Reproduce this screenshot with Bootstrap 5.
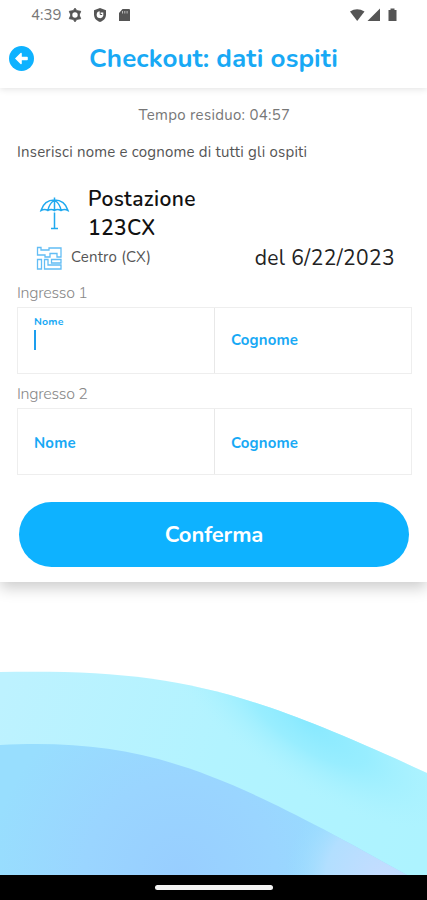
<!DOCTYPE html>
<html lang="it">
<head>
<meta charset="utf-8">
<meta name="viewport" content="width=device-width, initial-scale=1">
<title>Checkout: dati ospiti</title>
<link href="https://cdn.jsdelivr.net/npm/bootstrap@5.3.0/dist/css/bootstrap.min.css" rel="stylesheet">
<style>
  :root { --sky: #0eb2ff; --label: #18a9f5; }
  body { font-family: Nunito, Lato, "Open Sans", sans-serif; width: 427px; height: 900px; color: #555; }
  .semi { font-weight: 650; }
  .screen { height: 900px; }
  .status-row { height: 30px; padding: 0 28px 0 31px; }
  .clock { font-size: 15px; color: #777; width: 30px; }
  .app-header { height: 58px; padding: 0 34px 0 9px; box-shadow: 0 1px 7px rgba(0,0,0,.12); z-index: 2; }
  .page-title { font-size: 26px; letter-spacing: .08px; color: var(--label); line-height: 30px; margin: 0; }
  .sheet { height: 494px; padding: 0 15px 0 17px; box-shadow: 0 6px 14px rgba(0,0,0,.2); z-index: 1; }
  .timer { font-size: 15px; letter-spacing: .3px; line-height: 20px; margin-top: 17px; color: #777; }
  .hint { font-size: 15px; letter-spacing: .2px; line-height: 20px; margin-top: 17px; color: #555; }
  .spot { margin-top: 23px; height: 58px; padding-left: 22px; }
  .spot-name { font-size: 21px; line-height: 29px; letter-spacing: .4px; color: #111; margin-left: 18px; width: 130px; }
  .zone-row { height: 29px; padding: 0 17px 0 19px; }
  .zone { font-size: 15px; letter-spacing: .2px; margin-left: 9px; }
  .day { font-size: 21px; letter-spacing: .4px; line-height: 28px; color: #222; }
  .entry-title { font-size: 16px; font-weight: 300; line-height: 20px; color: #888; letter-spacing: -.3px; }
  .first-entry { margin-top: 11px; }
  .second-entry { margin-top: 10px; }
  .pair { height: 67px; border: 1px solid #eee; font-size: 15px; letter-spacing: .15px; color: var(--label); }
  .pair > .col { padding-left: 16px; font-weight: 700; }
  .pair > .col + .col { border-left: 1px solid #e8e8e8; }
  .tiny-label { font-size: 10.5px; line-height: 12px; padding-top: 8px; letter-spacing: .2px; }
  .caret { width: 2px; height: 20px; background: #1d9eee; margin-top: 2px; }
  .confirm { height: 65px; margin: 26.5px 3px 0 2px; padding-top: 9px; background: var(--sky); font-size: 22px; letter-spacing: -.1px; }
  .waves { height: 293px; }
  .navbar-strip { height: 25px; background: #000; }
  .home-pill { width: 118px; height: 5px; background: #f3f3f3; }
</style>
</head>
<body>
<div class="screen d-flex flex-column bg-white overflow-hidden">
  <div class="status-row d-flex align-items-center flex-shrink-0 bg-white position-relative z-3">
    <span class="clock">4:39</span>
    <svg class="ms-1 me-2" width="20" height="16" viewBox="0 0 20 16"><path d="M10 1.200 11.800 3.700 15.700 4.300 14.100 8 15.700 11.700 11.800 12.300 10 14.800 8.200 12.300 4.300 11.700 5.900 8 4.300 4.300 8.200 3.700z" fill="#555" stroke="#555" stroke-linejoin="round"/><circle cx="10" cy="8" r="2.700" fill="#fff"/></svg>
    <svg width="14" height="16" viewBox="0 0 14 16"><path d="M7 1 1 3.200v4.200C1 11 3.400 13.700 7 15c3.600-1.300 6-4 6-7.600V3.200z" fill="#555"/><path d="M7 4.300a3.400 3.400 0 1 0 3.300 4.400L10.300 5.500H7.500z" fill="#fff"/><path d="M7.200 4v3.500h2" stroke="#555" fill="none"/></svg>
    <svg class="ms-2" width="18" height="16" viewBox="0 0 18 16"><path d="M7.500 2H14q1 0 1 1v11H4V6z" fill="#555"/><path d="M7.500 4v2.500M9.800 4v2.500M12.100 4v2.500" stroke="#bbb"/></svg>
    <svg class="ms-auto" width="50" height="16" viewBox="0 0 50 16"><g fill="#555"><path d="M1 4.500Q8 0 15.500 4.500L8.200 14z"/><path d="M31 1.500V14H18.500z"/><path d="M39.500 3h2V1.500h4V3h2v11h-8z"/></g></svg>
  </div>

  <header class="app-header d-flex align-items-center bg-white position-relative flex-shrink-0">
    <svg width="25" height="26" viewBox="0 0 25 26"><circle cx="12.500" cy="12.500" r="12.500" fill="#0eb2ff"/><path d="M6 12.500l5.500-5.500q1-.8 1.300.5v3.200h5.200q.8 0 .8.800v2q0 .8-.8.800h-5.200v3.200q-.3 1.300-1.300.5z" fill="#fff"/></svg>
    <h1 class="page-title fw-bold text-center flex-grow-1">Checkout: dati ospiti</h1>
  </header>

  <main class="sheet bg-white position-relative flex-shrink-0 d-flex flex-column">
    <div class="timer text-center">Tempo residuo: 04:57</div>
    <div class="hint">Inserisci nome e cognome di tutti gli ospiti</div>

    <div class="spot d-flex align-items-center">
      <svg width="31" height="36" viewBox="0 0 31 36" fill="none" stroke="#20a9ef" stroke-width="1.500"><path d="M2 14.500C4 8 9 4 15.500 4S27 8 29 14.500Q25.500 12.500 22 14.500 18.500 12.500 15.500 14.500 12 12.500 9 14.500 5.500 12.500 2 14.500zM15.500 1.500V4M9 14Q10 8 15.500 4 21 8 22 14M15.500 4v10" /><path d="M15.500 16.500V32M12 32.500h7"/></svg>
      <div class="spot-name semi">Postazione 123CX</div>
    </div>

    <div class="zone-row d-flex align-items-center">
      <svg width="26" height="24" viewBox="0 0 26 24" fill="none" stroke="#62bdf5" stroke-width="1.300"><path d="M1.500 1.500H5v2.500h8V2h12v9h-4V7.500h-7V11H9V9H1.500zM1.500 13.500h4V23h-4zM8.500 13.500H12V19h13v4H8.500zM15.500 13.500H25V17h-9.500z"/></svg>
      <span class="zone">Centro (CX)</span>
      <span class="day ms-auto">del 6/22/2023</span>
    </div>

    <div class="entry-title first-entry mb-1">Ingresso 1</div>
    <div class="pair row g-0">
      <div class="col"><div class="tiny-label">Nome</div><div class="caret"></div></div>
      <div class="col d-flex align-items-center">Cognome</div>
    </div>
    <div class="entry-title second-entry mb-1">Ingresso 2</div>
    <div class="pair row g-0">
      <div class="col d-flex align-items-center pt-1">Nome</div>
      <div class="col d-flex align-items-center pt-1">Cognome</div>
    </div>
    <button type="button" class="confirm btn rounded-pill border-0 text-white fw-bold">Conferma</button>
  </main>

  <svg class="waves flex-shrink-0" width="427" viewBox="0 582 427 293" preserveAspectRatio="none">
    <defs>
      <linearGradient id="outer" gradientUnits="userSpaceOnUse" x1="0" y1="700" x2="427" y2="840"><stop offset="0" stop-color="#bdf2ff"/><stop offset=".5" stop-color="#b2f3ff"/><stop offset="1" stop-color="#adf3ff"/></linearGradient>
      <radialGradient id="glow" gradientUnits="userSpaceOnUse" cx="0" cy="0" r="1" gradientTransform="translate(308 722) rotate(34) scale(175 62)"><stop offset="0" stop-color="#88e9ff"/><stop offset=".4" stop-color="#92ecff" stop-opacity=".8"/><stop offset=".7" stop-color="#a0efff" stop-opacity=".4"/><stop offset="1" stop-color="#aff3ff" stop-opacity="0"/></radialGradient>
      <radialGradient id="inner" gradientUnits="userSpaceOnUse" cx="180" cy="875" r="190"><stop offset="0" stop-color="#98ceff"/><stop offset=".5" stop-color="#9ad5ff"/><stop offset="1" stop-color="#98defe"/></radialGradient>
      <radialGradient id="lilac" gradientUnits="userSpaceOnUse" cx="385" cy="880" r="100"><stop offset="0" stop-color="#c6dcff"/><stop offset=".6" stop-color="#b2dfff"/><stop offset="1" stop-color="#98defe" stop-opacity="0"/></radialGradient>
    </defs>
    <path d="M0 672C170 669 240 687 427 773V875H0z" fill="url(#outer)"/>
    <path d="M0 672C170 669 240 687 427 773V875H0z" fill="url(#glow)"/>
    <path d="M0 745C145 738 220 770 407 875H0z" fill="url(#inner)"/>
    <path d="M0 745C145 738 220 770 407 875H0z" fill="url(#lilac)"/>
  </svg>
  <div class="navbar-strip d-flex justify-content-center align-items-center flex-shrink-0"><div class="home-pill rounded-pill"></div></div>
</div>
</body>
</html>
